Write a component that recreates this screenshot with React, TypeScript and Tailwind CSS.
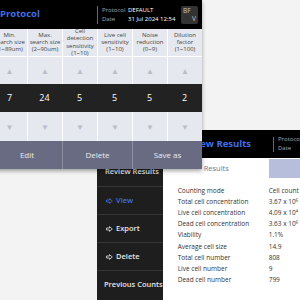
import React from "react"

const font = { fontFamily: '"Open Sans", "Noto Sans", sans-serif' }

const columns = [
  { label: ["Min.", "search size", "(1~89um)"], value: "7" },
  { label: ["Max.", "search size", "(2~90um)"], value: "24" },
  { label: ["Cell", "detection", "sensitivity", "(1~10)"], value: "5" },
  { label: ["Live cell", "sensitivity", "(1~10)"], value: "5" },
  { label: ["Noise", "reduction", "(0~9)"], value: "5" },
  { label: ["Dilution", "factor", "(1~100)"], value: "2" },
]

const results = [
  ["Counting mode", "Cell count"],
  ["Total cell concentration", "3.67 x 10\u2076"],
  ["Live cell concentration", "4.09 x 10\u2074"],
  ["Dead cell concentration", "3.63 x 10\u2076"],
  ["Viability", "1.1%"],
  ["Average cell size", "14.9"],
  ["Total cell number", "808"],
  ["Live cell number", "9"],
  ["Dead cell number", "799"],
]

const ArrowIcon = () => (
  <svg width="7" height="6" viewBox="0 0 7 6" fill="none">
    <path d="M0.5 2H3.5V0.6L6.3 3L3.5 5.4V4H0.5Z" stroke="currentColor" strokeWidth="0.8" strokeLinejoin="round" />
  </svg>
)

const MenuItem = ({ label, active }: { label: string; active?: boolean }) => (
  <div className={`h-[28px] flex items-center gap-[3px] pl-[9px] border-b border-[#353535] text-[7.5px] font-semibold ${active ? "text-[#3f6fe6]" : "text-[#e6e6e6]"}`}>
    <ArrowIcon />
    <span>{label}</span>
  </div>
)

export default function App() {
  return (
    <div className="relative w-[300px] h-[300px] overflow-hidden bg-[#f3f3f3]" style={font}>
      {/* review results window (behind) */}
      <div className="absolute left-[97px] top-[130px] w-[230px] h-[190px] bg-white flex flex-col">
        <div className="h-[28px] bg-black flex items-center shrink-0">
          <span className="pl-[83px] w-[176px] text-[9.5px] font-bold text-[#3f6fe6] whitespace-nowrap">Review Results</span>
          <div className="h-[15px] border-l border-[#666] pl-[4px] flex flex-col justify-center text-[6px] leading-[9px] text-[#aaa]">
            <span>Protocol</span>
            <span>Date</span>
          </div>
        </div>
        <div className="flex flex-1">
          <div className="w-[70px] bg-[#1e1e1e] flex flex-col">
            <div className="h-[29px] flex items-center pl-[8px] border-b border-[#353535] text-[7.5px] font-semibold text-[#e6e6e6]">Review Results</div>
            <MenuItem label="View" active />
            <MenuItem label="Export" />
            <MenuItem label="Delete" />
            <div className="h-[28px] flex items-center pl-[7px] text-[7.5px] font-semibold text-[#e6e6e6] whitespace-nowrap">Previous Counts</div>
          </div>
          <div className="flex-1 flex flex-col">
            <div className="h-[21px] flex items-end">
              <span className="w-[106px] pl-[41px] mb-[5px] text-[7.5px] text-[#6b7896]">Results</span>
              <div className="w-[60px] h-[19px] mb-[1px] bg-[#b6bedb]" />
            </div>
            <div className="pt-[6px] pl-[15px] flex flex-col">
              {results.map(([k, v]) => (
                <div key={k} className="h-[11.2px] flex items-center text-[6.5px] text-[#333] whitespace-nowrap">
                  <span className="w-[91px]">{k}</span>
                  <span>{v}</span>
                </div>
              ))}
            </div>
          </div>
        </div>
      </div>

      {/* protocol window (front) */}
      <div className="absolute -left-[8px] top-0 w-[210px] flex flex-col shadow-[0_2px_4px_rgba(0,0,0,0.35)]">
        <div className="h-[29px] bg-black flex items-center">
          <span className="pl-[8px] w-[105px] text-[9.5px] font-bold text-[#3f6fe6]">Protocol</span>
          <div className="h-[18px] border-l border-[#666] pl-[4px] flex flex-col justify-center text-[6px] leading-[9px]">
            <div className="flex"><span className="w-[26px] text-[#aaa]">Protocol</span><span className="text-white">DEFAULT</span></div>
            <div className="flex"><span className="w-[26px] text-[#aaa]">Date</span><span className="text-white">31 Jul 2024 12:54</span></div>
          </div>
          <div className="ml-auto mr-[4px] w-[17px] h-[18px] bg-[#333] rounded-[2px] flex flex-col justify-between px-[2px] py-[1px] text-[6.5px] leading-[8px] text-[#ccc]">
            <span>BF</span>
            <span className="self-end">V</span>
          </div>
        </div>
        <div className="grid grid-cols-6 bg-[#e5e8ee]">
          {columns.map((c, i) => (
            <div key={i} className={`h-[28px] flex flex-col items-center justify-center text-[6px] leading-[7.3px] text-[#444] text-center border-b border-white ${i > 0 ? "border-l" : ""}`}>
              {c.label.map(l => <span key={l} className="whitespace-nowrap">{l}</span>)}
            </div>
          ))}
          {columns.map((c, i) => (
            <div key={i} className={`h-[27px] flex items-center justify-center text-[8px] text-[#b9bdc7] border-white ${i > 0 ? "border-l" : ""}`}>▲</div>
          ))}
        </div>
        <div className="grid grid-cols-6 bg-[#222]">
          {columns.map((c, i) => (
            <div key={i} className="h-[28px] flex items-center justify-center text-[9px] text-white">{c.value}</div>
          ))}
        </div>
        <div className="grid grid-cols-6 bg-[#e5e8ee]">
          {columns.map((c, i) => (
            <div key={i} className={`h-[29px] flex items-center justify-center text-[8px] text-[#b9bdc7] border-white ${i > 0 ? "border-l" : ""}`}>▼</div>
          ))}
        </div>
        <div className="grid grid-cols-3 bg-[#686b82]">
          {["Edit", "Delete", "Save as"].map((b, i) => (
            <div key={b} className={`h-[28px] flex items-center justify-center text-[8px] text-[#ebebf0] border-[#8d90a3] ${i > 0 ? "border-l" : ""}`}>{b}</div>
          ))}
        </div>
      </div>
    </div>
  )
}
